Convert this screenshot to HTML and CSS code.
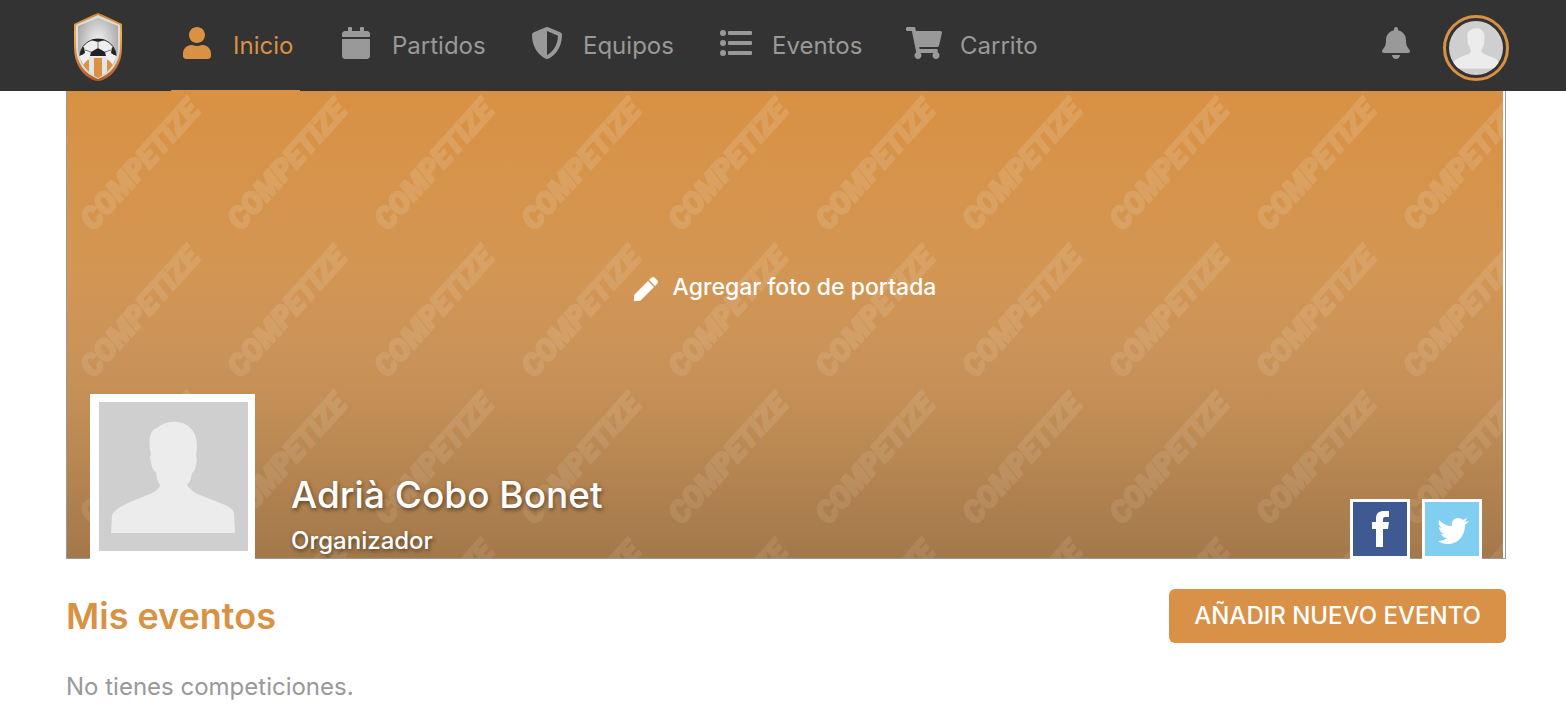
FILE: index.html
```html
<!DOCTYPE html>
<html lang="es">
<head>
  <meta charset="UTF-8">
  <meta name="viewport" content="width=device-width, initial-scale=1.0">
  <title>Competize</title>
  <link rel="stylesheet" href="styles.css">
</head>
<body>
  <!-- shared silhouette -->
  <svg class="defs" width="0" height="0" aria-hidden="true">
    <symbol id="silhouette" viewBox="0 0 149 149">
      <rect width="149" height="149" fill="#cfcfcf"/>
      <path d="M12 131l1-18c3-6 10-9 18-13l20-8c5-2 9-5 10-9l-3-6-1-7c-4-1-5-9-6-15l1-3c-3-12-2-24 6-26 6-5 13-7 21-6 6 1 10 3 13 7 6 5 7 16 5 27l1 3c-1 6-2 13-5 14-1 6-2 9-5 12 4 5 7 8 13 10l25 10c6 3 9 5 9 9l1 19z" fill="#ececec"/>
    </symbol>
  </svg>

  <header class="navbar">
    <a class="logo" href="#" aria-label="Competize">
      <svg width="48" height="68" viewBox="0 0 48 68">
        <defs>
          <linearGradient id="rim" x1="0" y1="0" x2="0" y2="1">
            <stop offset="0" stop-color="#c98436"/>
            <stop offset=".3" stop-color="#efb04a"/>
            <stop offset="1" stop-color="#b5582a"/>
          </linearGradient>
          <radialGradient id="steel" cx=".5" cy=".4" r=".6">
            <stop offset="0" stop-color="#f4f4f4"/>
            <stop offset="1" stop-color="#a2a2a2"/>
          </radialGradient>
          <clipPath id="inner"><path d="M24 5L44 13v21c0 14-8 25-20 31C12 59 4 48 4 34V13z"/></clipPath>
        </defs>
        <path d="M24 0l5 2 19 9v23c0 17-8 28-19 33q-5 2-10 0C8 62 0 51 0 34V11l19-9z" fill="url(#rim)"/>
        <path d="M24 2L46 12v22c0 16-9 27-22 32C11 61 2 50 2 34V12z" fill="#dcdcdc"/>
        <path d="M24 5L44 13v21c0 14-8 25-20 31C12 59 4 48 4 34V13z" fill="url(#steel)"/>
        <g clip-path="url(#inner)">
          <path d="M4 43h40v25H4z" fill="#e4e4e4"/>
          <path d="M5 48l10 -1v20H5zM20 45h8v22h-8zM33 47l10 1v18H33z" fill="#d99143"/>
          <path d="M6 43a18 17 0 0 1 36 0l-3 9-7-8H16l-7 8z" fill="#eee"/>
          <path d="M6 43a18 17 0 0 1 36 0" fill="none" stroke="#333"/>
          <path d="M17 27l7 2 7-2-3-1h-8zM24 35l7 4 1 4H16l1-4zM6 42c0-4 2-7 4-8l1 6-3 2zM42 42c0-4-2-7-4-8l-1 6 3 2z" fill="#222"/>
          <path d="M24 28v8M17 39l-6-2M31 39l6-2" stroke="#777" fill="none"/>
        </g>
      </svg>
    </a>
    <nav class="menu">
      <a class="menu-item active" href="#">
        <svg viewBox="0 0 448 512"><path d="M224 256c70.7 0 128-57.3 128-128S294.7 0 224 0 96 57.3 96 128s57.3 128 128 128zm89.6 32h-16.7c-22.2 10.2-46.9 16-72.9 16s-50.6-5.8-72.9-16h-16.7C60.2 288 0 348.2 0 422.4V464c0 26.5 21.5 48 48 48h352c26.5 0 48-21.5 48-48v-41.6c0-74.2-60.2-134.4-134.4-134.4z"/></svg>
        <span>Inicio</span>
      </a>
      <a class="menu-item" href="#">
        <svg viewBox="0 0 448 512"><path d="M12 192h424c6.600 0 12 5.400 12 12v260c0 26.500-21.500 48-48 48H48c-26.500 0-48-21.500-48-48V204c0-6.600 5.400-12 12-12zm436-44v-36c0-26.500-21.500-48-48-48h-48V12c0-6.600-5.400-12-12-12h-40c-6.600 0-12 5.400-12 12v52H160V12c0-6.600-5.400-12-12-12h-40c-6.600 0-12 5.400-12 12v52H48C21.500 64 0 85.500 0 112v36c0 6.600 5.400 12 12 12h424c6.600 0 12-5.400 12-12z"/></svg>
        <span>Partidos</span>
      </a>
      <a class="menu-item" href="#">
        <svg viewBox="0 0 512 512"><path d="M466.500 83.700l-192-80a48.150 48.150 0 0 0-36.900 0l-192 80C27.700 91.100 16 108.600 16 128c0 198.500 114.500 335.700 221.500 380.300 11.800 4.900 25.100 4.900 36.900 0C360.100 472.600 496 349.300 496 128c0-19.400-11.700-36.900-29.500-44.300zM256.100 446.300l-.1-381 175.900 73.300c-3.300 151.400-82.100 261.100-175.800 307.700z"/></svg>
        <span>Equipos</span>
      </a>
      <a class="menu-item" href="#">
        <svg viewBox="0 0 512 512"><path d="M48 48a48 48 0 1 0 48 48 48 48 0 0 0-48-48zm0 160a48 48 0 1 0 48 48 48 48 0 0 0-48-48zm0 160a48 48 0 1 0 48 48 48 48 0 0 0-48-48zm448 16H144a16 16 0 0 0-16 16v32a16 16 0 0 0 16 16h352a16 16 0 0 0 16-16v-32a16 16 0 0 0-16-16zm0-320H144a16 16 0 0 0-16 16v32a16 16 0 0 0 16 16h352a16 16 0 0 0 16-16V80a16 16 0 0 0-16-16zm0 160H144a16 16 0 0 0-16 16v32a16 16 0 0 0 16 16h352a16 16 0 0 0 16-16v-32a16 16 0 0 0-16-16z"/></svg>
        <span>Eventos</span>
      </a>
      <a class="menu-item" href="#">
        <svg viewBox="0 0 576 512"><path d="M528.120 301.319l47.273-208C578.806 78.301 567.391 64 551.990 64H159.208l-9.166-44.810C147.758 8.021 137.930 0 126.529 0H24C10.745 0 0 10.745 0 24v16c0 13.255 10.745 24 24 24h69.883l70.248 343.435C147.325 417.100 136 435.222 136 456c0 30.928 25.072 56 56 56s56-25.072 56-56c0-15.674-6.447-29.835-16.824-40h209.647C430.447 426.165 424 440.326 424 456c0 30.928 25.072 56 56 56s56-25.072 56-56c0-22.172-12.888-41.332-31.579-50.405l5.517-24.276c3.413-15.018-8.002-29.319-23.403-29.319H218.117l-6.545-32h293.145c11.206 0 20.920-7.754 23.403-18.681z"/></svg>
        <span>Carrito</span>
      </a>
    </nav>
    <div class="user">
      <button class="bell" type="button" aria-label="Notificaciones">
        <svg viewBox="0 0 448 512"><path d="M224 512c35.320 0 63.970-28.650 63.970-64H160.030c0 35.350 28.650 64 63.970 64zm215.390-149.710c-19.320-20.760-55.470-51.990-55.470-154.290 0-77.700-54.480-139.900-127.940-155.160V32c0-17.670-14.320-32-31.980-32s-31.980 14.330-31.980 32v20.840C118.560 68.100 64.080 130.300 64.080 208c0 102.300-36.150 133.530-55.470 154.290-6 6.450-8.660 14.160-8.610 21.710.11 16.400 12.980 32 32.100 32h383.800c19.120 0 32-15.600 32.100-32 .05-7.550-2.610-15.270-8.610-21.710z"/></svg>
      </button>
      <a class="user-photo" href="#" aria-label="Mi perfil">
        <svg viewBox="0 0 149 149"><use href="#silhouette"/></svg>
      </a>
    </div>
  </header>

  <main class="container">
    <section class="cover">
      <svg class="watermark" aria-hidden="true">
        <defs>
          <pattern id="brand" width="147" height="147" patternUnits="userSpaceOnUse">
            <text class="brand-text" x="73" y="84" text-anchor="middle" transform="rotate(-48 73 74)">COMPETIZE</text>
          </pattern>
        </defs>
        <rect width="100%" height="100%" fill="url(#brand)"/>
      </svg>
      <button class="add-cover" type="button">
        <svg viewBox="0 0 24 24"><path d="M0 24v-6L14 4l6 6L6 24zM15 3l2-2q2-2 4 0l2 2q2 2 0 4l-2 2z"/></svg>
        <span>Agregar foto de portada</span>
      </button>
      <div class="profile">
        <div class="profile-photo">
          <svg viewBox="0 0 149 149"><use href="#silhouette"/></svg>
        </div>
        <div class="profile-text">
          <h1>Adrià Cobo Bonet</h1>
          <p>Organizador</p>
        </div>
        <div class="social">
          <a class="facebook" href="#" aria-label="Facebook">
            <svg viewBox="0 0 54 54"><path d="M23 45V27h-4v-7h4v-3c0-6 3-8 8-8h5v6h-3c-3 0-3 1-3 5h6l-1 7h-5v18z"/></svg>
          </a>
          <a class="twitter" href="#" aria-label="Twitter">
            <svg viewBox="0 0 54 54"><path d="M14 18c4 4 8 6 13 6-1-5 2-8 6-8q3 0 5 2l4-2-2 4 4-1-4 4c0 12-8 19-17 19q-6 0-10-3c4 0 7-1 9-3-3 0-5-2-6-4h3c-3-1-5-4-5-7l3 1c-3-2-4-5-3-8z"/></svg>
          </a>
        </div>
      </div>
    </section>

    <section class="events">
      <div class="events-header">
        <h2>Mis eventos</h2>
        <button class="add-event" type="button">AÑADIR NUEVO EVENTO</button>
      </div>
      <p class="empty">No tienes competiciones.</p>
    </section>
  </main>
</body>
</html>
```
FILE: styles.css
```css
* {
  box-sizing: border-box;
}

body {
  margin: 0;
  background: #fff;
  font-family: Inter, "Open Sans", sans-serif;
  font-size: 24px;
  color: #999;
}

h1, h2, p {
  margin: 0;
}

a {
  text-decoration: none;
}

button {
  border: none;
  padding: 0;
  background: none;
  font-family: inherit;
  cursor: pointer;
}

svg {
  display: block;
}

.defs {
  position: absolute;
}

/* top bar */
.navbar {
  display: flex;
  align-items: center;
  height: 91px;
  padding: 0 57px 0 74px;
  background: #333;
}

.logo {
  margin: 3px 49px 0 0;
}

.menu {
  display: grid;
  grid-template-columns: 159px 191px 189px 188px auto;
  justify-items: start;
  align-self: stretch;
}

.menu-item {
  display: flex;
  align-items: center;
  gap: 16px;
  padding: 0 7px 0 6px;
  border-bottom: 1px solid transparent;
  color: #999;
}

.menu-item svg {
  width: 40px;
  height: 32px;
  margin-bottom: 4px;
  fill: currentColor;
}

.menu-item.active {
  color: #d99143;
  border-bottom-color: #d99143;
}

.user {
  display: flex;
  align-items: center;
  gap: 33px;
  margin-left: auto;
}

.bell svg {
  width: 28px;
  height: 32px;
  margin-bottom: 6px;
  fill: #999;
}

.user-photo {
  width: 66px;
  height: 66px;
  margin-top: 5px;
  padding: 3px;
  border: 3px solid #d99143;
  border-radius: 50%;
}

.user-photo svg {
  width: 100%;
  height: 100%;
  border-radius: 50%;
}

.container {
  margin: 0 60px 0 66px;
}

/* cover */
.cover {
  position: relative;
  display: flex;
  flex-direction: column;
  height: 468px;
  padding-right: 2px;
  border: 1px solid #999;
  border-top: none;
  background: linear-gradient(#d99143, #d39653 38%, #cb9358 55%, #c28e56 68%, #a3784a) content-box;
}

.watermark {
  position: absolute;
  top: 0;
  left: 0;
  width: calc(100% - 2px);
  height: 100%;
  -webkit-mask-image: linear-gradient(#000, rgba(0, 0, 0, 0.6));
  mask-image: linear-gradient(#000, rgba(0, 0, 0, 0.6));
}

.brand-text {
  font: italic 900 30px Roboto, "Liberation Sans", sans-serif;
  fill: #f0dcc0;
  stroke: #f0dcc0;
  stroke-width: 2px;
  opacity: 0.2;
}

.add-cover {
  position: relative;
  display: flex;
  align-items: center;
  gap: 15px;
  margin: 182px auto auto;
  color: #fff;
  font-size: 23px;
  font-weight: 500;
}

.add-cover svg {
  width: 24px;
  height: 24px;
  margin-top: 4px;
  fill: currentColor;
}

.profile {
  position: relative;
  display: flex;
  align-items: flex-end;
  margin: 0 21px -1px 23px;
}

.profile-photo {
  width: 165px;
  height: 165px;
  padding: 8px 7px 8px 9px;
  background: #fff;
}

.profile-text {
  margin-left: 36px;
  color: #fff;
  font-weight: 500;
  text-shadow: 1px 2px 4px rgba(0, 0, 0, 0.5);
}

.profile-text h1 {
  font-size: 37px;
  font-weight: 500;
  line-height: 56px;
}

.profile-text p {
  line-height: 36px;
}

.social {
  display: flex;
  gap: 12px;
  margin-left: auto;
}

.social a {
  width: 60px;
  height: 60px;
  border: 3px solid #fff;
}

.social svg {
  fill: #fff;
}

.facebook {
  background: #3f5993;
}

.twitter {
  background: #80cef0;
}

/* events */
.events {
  padding-top: 30px;
}

.events-header {
  display: flex;
  justify-content: space-between;
  align-items: center;
}

.events-header h2 {
  color: #d99143;
  font-size: 36px;
  font-weight: 600;
}

.add-event {
  height: 54px;
  padding: 0 25px 2px;
  border-radius: 6px;
  background: #d89146;
  color: #fff;
  font-size: 24px;
  font-weight: 500;
}

.empty {
  margin-top: 26px;
  line-height: 36px;
}
```
